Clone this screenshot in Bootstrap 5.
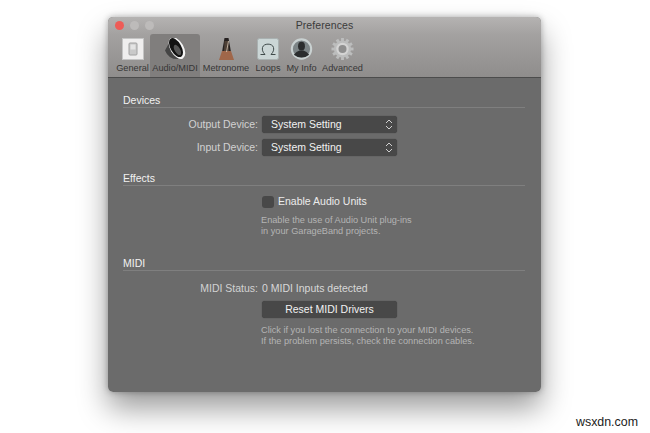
<!DOCTYPE html>
<html lang="en">
<head>
  <meta charset="UTF-8" />
  <meta name="viewport" content="width=device-width, initial-scale=1.0"/>
  <title>Preferences</title>
  <link href="https://cdn.jsdelivr.net/npm/bootstrap@5.3.0/dist/css/bootstrap.min.css" rel="stylesheet">
  <style>
    html, body {
      height: 433px;
      overflow: hidden;
    }

    body {
      font-family: "Liberation Sans", Arial, sans-serif;
      background: #fff;
      padding: 17px 109px 0 108px;
      position: relative;
    }

    .window-shadow {
      border-radius: 5px;
      box-shadow: 0 16px 30px rgba(0,0,0,0.4), 0 0 6px rgba(0,0,0,0.3);
    }

    .prefs-window {
      height: 375px;
      background: #6b6b6b;
      border-radius: 5px;
      overflow: hidden;
    }

    /* Title bar and toolbar */
    .toolbar {
      height: 61px;
      background: linear-gradient(#b5b3b2, #a3a1a0 30%, #8f8d8c);
      border-bottom: 1px solid #4c4c4c;
      position: relative;
    }

    .title {
      font-size: 10.5px;
      letter-spacing: 0.1px;
      line-height: 17px;
      color: #3b3b3b;
      text-align: center;
    }

    .traffic {
      position: absolute;
      top: 4px;
      left: 7px;
      gap: 6px;
    }

    .traffic span {
      display: block;
      width: 9px;
      height: 9px;
      border-radius: 50%;
      background: #bdbbba;
    }

    .traffic span.close-dot {
      background: #ee5c57;
    }

    .tool-row {
      padding-left: 7px;
    }

    .tool {
      height: 43px;
      font-size: 9.2px;
      line-height: 10px;
      color: #363636;
      padding-top: 4px;
      white-space: nowrap;
    }

    .tool svg {
      display: block;
      margin-bottom: 3px;
    }

    .tool.active {
      background: #807e7d;
      border-radius: 3px 3px 0 0;
    }

    .tool-general { width: 35px; }
    .tool-audio { width: 50px; }
    .tool-metronome { width: 52px; }
    .tool-loops { width: 32px; }
    .tool-info { width: 35px; }
    .tool-advanced { width: 47px; }

    /* Sections */
    .section-title {
      font-size: 10.5px;
      line-height: 13px;
      color: #f1f1f1;
      margin: 16px 16px 0 15px;
      border-bottom: 1px solid #7f7f7f;
    }

    .label-col {
      width: 150px;
      font-size: 10.5px;
      color: #d2d2d2;
      text-align: right;
    }

    .mac-select, .mac-btn {
      width: 135px;
      height: 17px;
      background: #484848;
      border: 0;
      border-radius: 3px;
      color: #f2f2f2;
      font-size: 10.5px;
      line-height: 17px;
      padding: 0 4px 0 9px;
      box-shadow: 0 0 1px rgba(0,0,0,0.5);
    }

    .mac-btn {
      padding: 0;
      text-align: center;
    }

    .mac-check {
      width: 12px;
      height: 12px;
      background: #484848;
      border-radius: 3px;
    }

    .value-text {
      font-size: 10.5px;
      line-height: 13px;
      color: #ebebeb;
    }

    .status-text {
      color: #d8d8d8;
    }

    .help {
      font-size: 9.2px;
      line-height: 11px;
      color: #b4b4b4;
      margin: 0 0 0 153px;
      white-space: nowrap;
    }

    .row-gap-6 { margin-top: 6px; }
    .row-gap-9 { margin-top: 9px; }
    .row-gap-10 { margin-top: 10px; }
    .help-first { margin-top: 7px; }
    .midi-title { margin-top: 20px; }

    .watermark {
      position: absolute;
      left: 576px;
      top: 415px;
      font-size: 12.4px;
      line-height: 14px;
      color: #222;
    }
  </style>
</head>
<body>
  <div class="window-shadow">
    <div class="prefs-window">
      <div class="toolbar">
        <div class="traffic d-flex">
          <span class="close-dot"></span><span></span><span></span>
        </div>
        <div class="title">Preferences</div>
        <div class="tool-row d-flex align-items-start">
          <!-- General -->
          <div class="tool tool-general d-flex flex-column align-items-center">
            <svg width="22" height="22" viewBox="0 0 22 22">
              <rect x="0.500" y="0.500" width="21" height="21" fill="#efeeee" stroke="#c4c4c4"/>
              <rect x="7" y="5" width="8" height="12" rx="1" fill="#c9c9c9" stroke="#a2a2a2"/>
              <rect x="8.500" y="6.500" width="5" height="5" fill="#e4e4e4"/>
            </svg>
            <span>General</span>
          </div>
          <!-- Audio/MIDI -->
          <div class="tool tool-audio active d-flex flex-column align-items-center">
            <svg width="21" height="22" viewBox="0 0 22 23">
              <path d="M0 13 L5 4 L10 18 L15 22 Q4 23 0 13Z" fill="#454545"/>
              <ellipse cx="12.500" cy="10.500" rx="7" ry="12.500" transform="rotate(-30 12.500 10.500)" fill="#f4f4f4"/>
              <ellipse cx="11.500" cy="10" rx="5.600" ry="11" transform="rotate(-30 11.500 10)" fill="#121212"/>
              <ellipse cx="13" cy="12.500" rx="2.800" ry="6" transform="rotate(-30 13 12.500)" fill="#555"/>
            </svg>
            <span>Audio/MIDI</span>
          </div>
          <!-- Metronome -->
          <div class="tool tool-metronome d-flex flex-column align-items-center">
            <svg width="15" height="22" viewBox="0 0 15 22">
              <path d="M5.500 0 H9.500 L12 14 H3Z" fill="#262120"/>
              <path d="M3 13 H12 L15 22 H0Z" fill="#a0674a"/>
              <path d="M5.500 3 H9.500 L10 13 H5Z" fill="#4e4036"/>
              <path d="M7.500 14 L9.500 3" stroke="#d8c9b8" stroke-width="0.800"/>
            </svg>
            <span>Metronome</span>
          </div>
          <!-- Loops -->
          <div class="tool tool-loops d-flex flex-column align-items-center">
            <svg width="22" height="22" viewBox="0 0 22 22">
              <rect x="0.500" y="0.500" width="21" height="21" rx="2" fill="#cbd6d6" stroke="#a9b1b1"/>
              <path d="M3.500 16.500 H8 C5.500 14 5 11.500 5.500 9.500 C6.500 5 15.500 5 16.500 9.500 C17 11.500 16.500 14 14 16.500 H18.500" fill="none" stroke="#3f4a4a" stroke-width="1"/>
            </svg>
            <span>Loops</span>
          </div>
          <!-- My Info -->
          <div class="tool tool-info d-flex flex-column align-items-center">
            <svg width="23" height="22" viewBox="0 0 23 23">
              <circle cx="11.500" cy="11.500" r="11.200" fill="#c9d1d1"/>
              <circle cx="11.500" cy="11.500" r="9" fill="#7c8486"/>
              <ellipse cx="11.500" cy="8.500" rx="3.600" ry="4.600" fill="#2b2d2e"/>
              <path d="M3.500 17.500 Q6 14 9.500 13 H13.500 Q17 14 19.500 17.500 Q16 20.500 11.500 20.500 Q7 20.500 3.500 17.500Z" fill="#2b2d2e"/>
            </svg>
            <span>My Info</span>
          </div>
          <!-- Advanced -->
          <div class="tool tool-advanced d-flex flex-column align-items-center">
            <svg width="23" height="22" viewBox="0 0 24 23">
              <g fill="#bcbdbd">
                <circle cx="12" cy="11.500" r="9"/>
                <rect x="10.500" y="0" width="3" height="23"/>
                <rect x="10.500" y="0" width="3" height="23" transform="rotate(30 12 11.500)"/>
                <rect x="10.500" y="0" width="3" height="23" transform="rotate(60 12 11.500)"/>
                <rect x="10.500" y="0" width="3" height="23" transform="rotate(90 12 11.500)"/>
                <rect x="10.500" y="0" width="3" height="23" transform="rotate(120 12 11.500)"/>
                <rect x="10.500" y="0" width="3" height="23" transform="rotate(150 12 11.500)"/>
              </g>
              <circle cx="12" cy="11.500" r="6.500" fill="#d4d4d4"/>
              <circle cx="12" cy="11.500" r="4.200" fill="#8f8f8f"/>
            </svg>
            <span>Advanced</span>
          </div>
        </div>
      </div>

      <!-- Devices -->
      <div class="section-title">Devices</div>
      <div class="d-flex align-items-center mt-2">
        <div class="label-col">Output Device:</div>
        <div class="mac-select ms-1 d-flex justify-content-between align-items-center">
          <span>System Setting</span>
          <svg width="8" height="11" viewBox="0 0 8 11"><path d="M1 4 L4 1 L7 4 M1 7 L4 10 L7 7" fill="none" stroke="#d0d0d0" stroke-width="1"/></svg>
        </div>
      </div>
      <div class="d-flex align-items-center row-gap-6">
        <div class="label-col">Input Device:</div>
        <div class="mac-select ms-1 d-flex justify-content-between align-items-center">
          <span>System Setting</span>
          <svg width="8" height="11" viewBox="0 0 8 11"><path d="M1 4 L4 1 L7 4 M1 7 L4 10 L7 7" fill="none" stroke="#d0d0d0" stroke-width="1"/></svg>
        </div>
      </div>

      <!-- Effects -->
      <div class="section-title">Effects</div>
      <div class="d-flex align-items-center row-gap-9">
        <div class="label-col"></div>
        <div class="mac-check ms-1"></div>
        <div class="value-text ms-1">Enable Audio Units</div>
      </div>
      <p class="help help-first">Enable the use of Audio Unit plug-ins<br>in your GarageBand projects.</p>

      <!-- MIDI -->
      <div class="section-title midi-title">MIDI</div>
      <div class="d-flex align-items-center row-gap-10">
        <div class="label-col">MIDI Status:</div>
        <div class="value-text status-text ms-1">0 MIDI Inputs detected</div>
      </div>
      <div class="d-flex mt-1">
        <div class="label-col"></div>
        <button type="button" class="mac-btn ms-1">Reset MIDI Drivers</button>
      </div>
      <p class="help help-first">Click if you lost the connection to your MIDI devices.<br>If the problem persists, check the connection cables.</p>
    </div>
  </div>
  <div class="watermark">wsxdn.com</div>
</body>
</html>
